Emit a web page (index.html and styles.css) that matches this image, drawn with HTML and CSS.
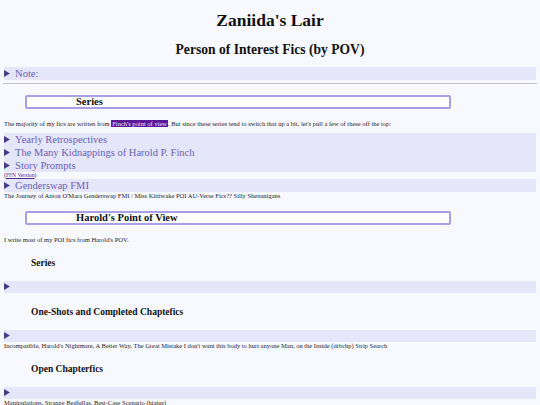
FILE: index.html
```html
<!DOCTYPE html>
<html lang="en">
<head>
    <meta charset="UTF-8">
    <meta name="viewport" content="width=device-width, initial-scale=1.0">
    <title>Zaniida's Lair</title>
    <link rel="stylesheet" href="styles.css">
</head>
<body>

    <h1 class="site-title">Zaniida's Lair</h1>
    <h2 class="page-title">Person of Interest Fics (by POV)</h2>

    <details class="drawer">
        <summary>Note:</summary>
        <p>These are sorted by whose head the story is mostly in.</p>
    </details>
    <hr class="divider">

    <h3 class="section-box">Series</h3>
    <p class="blurb">The majority of my fics are written from <mark class="hl">Finch's point of view</mark>. But since these series tend to switch that up a bit, let's pull a few of these off the top:</p>

    <details class="drawer">
        <summary>Yearly Retrospectives</summary>
    </details>
    <details class="drawer">
        <summary>The Many Kidnappings of Harold P. Finch</summary>
    </details>
    <details class="drawer">
        <summary>Story Prompts</summary>
    </details>
    <div class="tiny">(<a href="#">FFN Version</a>)</div>
    <details class="drawer">
        <summary>Genderswap FMI</summary>
    </details>
    <p class="blurb tight">The Journey of Anton O'Mara Genderswap FMI / Miss Kittiwake POI AU-Verse Fics?? Silly Shenanigans</p>

    <h3 class="section-box">Harold's Point of View</h3>
    <p class="blurb">I write most of my POI fics from Harold's POV.</p>

    <h4 class="sub-title">Series</h4>
    <details class="drawer empty">
        <summary></summary>
    </details>

    <h4 class="sub-title">One-Shots and Completed Chaptefics</h4>
    <details class="drawer empty">
        <summary></summary>
    </details>
    <p class="blurb tight">Incompatible, Harold's Nightmare, A Better Way, The Great Mistake I don't want this body to hurt anyone Man, on the Inside (drbchp) Strip Search</p>

    <h4 class="sub-title">Open Chapterfics</h4>
    <details class="drawer empty">
        <summary></summary>
    </details>
    <p class="blurb tight">Manipulations, Strange Bedfellas, Best-Case Scenario (hiatus)</p>

</body>
</html>
```

FILE: styles.css
```css
body {
    margin: 0;
    padding: 0 4px;
    font-family: "Liberation Serif", "Times New Roman", serif;
    font-size: 6.5px;
    line-height: 8px;
    color: #1c1c1c;
    background-color: #f8f8ff;
}

.site-title {
    margin: 10px 0 0;
    font-size: 17.5px;
    line-height: 20px;
    text-align: center;
    color: #111;
}

.page-title {
    margin: 12px 0 0;
    font-size: 13.6px;
    line-height: 16px;
    text-align: center;
    color: #111;
}

/* collapsible lavender bars */
.drawer {
    margin: 0;
    background-color: #e6e6fa;
}

.drawer summary {
    font-size: 10.5px;
    line-height: 13px;
    color: #6a60b4;
    cursor: pointer;
}

.drawer summary::marker {
    color: #463b8a;
}

.drawer p {
    margin: 0;
}

.page-title + .drawer {
    margin-top: 9px;
}

.drawer.empty summary {
    line-height: 12px;
}

.divider {
    margin: 3px -1px 0;
    border: 0;
    border-top: 1px solid #c4c4cc;
}

.section-box {
    width: 80%;
    box-sizing: border-box;
    margin: 11px 0 0 21px;
    padding: 0 0 0 49px;
    font-size: 10.5px;
    line-height: 10px;
    color: #111;
    background-color: #fff;
    border: 2px solid #a99fe6;
    border-radius: 2px;
}

.blurb {
    margin: 11px 0 5px;
}

.blurb.tight {
    margin: 0;
}

.hl {
    padding: 0 1px;
    color: #e8e0ff;
    background-color: #5a189a;
}

.tiny {
    font-size: 5.6px;
    line-height: 7px;
}

.tiny a {
    color: #4b2a8c;
}

.sub-title {
    margin: 14px 0 13px 27px;
    font-size: 9.5px;
    line-height: 10px;
    color: #111;
}
```
